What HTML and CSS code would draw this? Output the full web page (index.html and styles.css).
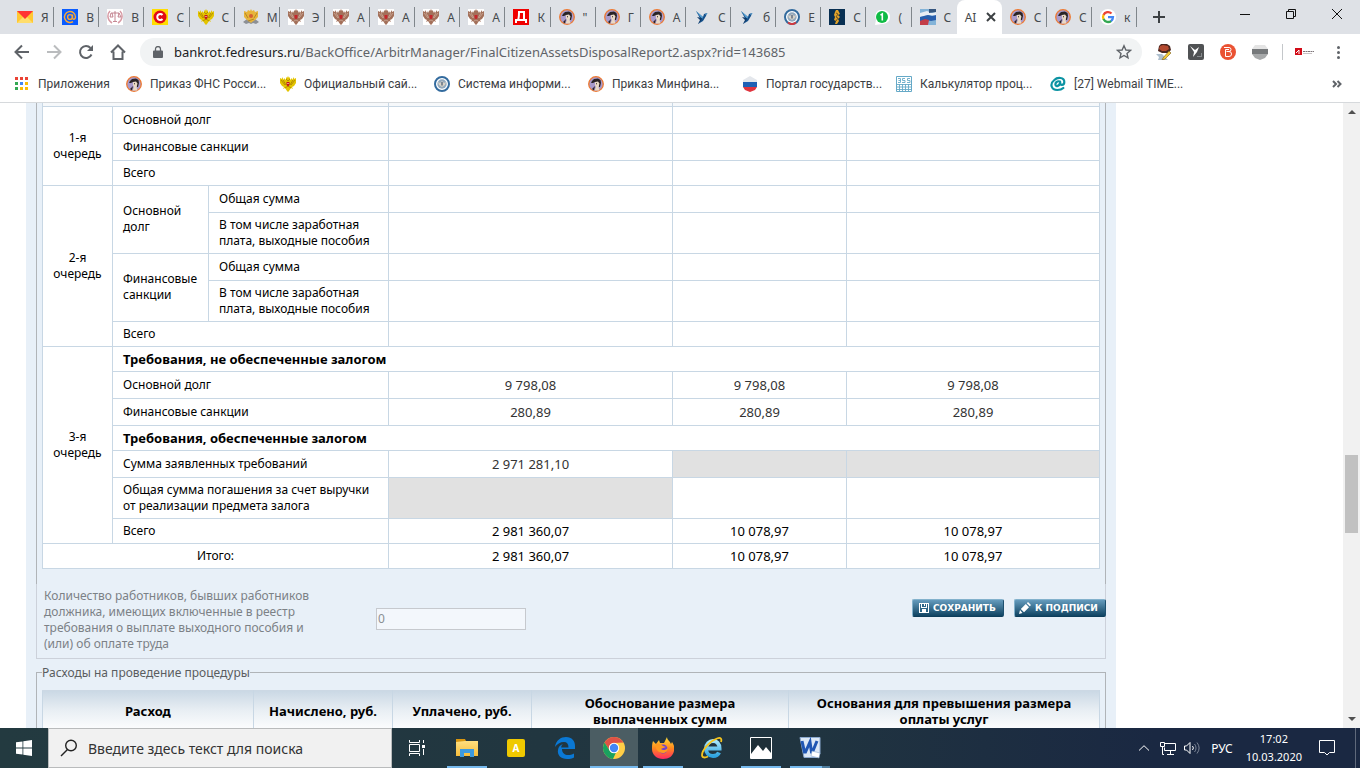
FILE: index.html
```html
<!DOCTYPE html>
<html lang="ru">
<head>
  <meta charset="UTF-8">
  <meta name="viewport" content="width=device-width, initial-scale=1.0">
  <title>АРМ арбитражного управляющего</title>
  <link rel="stylesheet" href="styles.css">
</head>
<body>
  <!-- Icon sprite -->
  <svg class="sprite" aria-hidden="true">
    <defs>
      <linearGradient id="g-fox" x1="0" y1="0" x2="0" y2="1"><stop offset="0" stop-color="#ffe03a"/><stop offset=".5" stop-color="#ff8a1e"/><stop offset="1" stop-color="#ff2a63"/></linearGradient>
      <linearGradient id="g-ie" x1="0" y1="0" x2="0" y2="1"><stop offset="0" stop-color="#a8e6fb"/><stop offset="1" stop-color="#2fa4e0"/></linearGradient>
      <linearGradient id="g-folder" x1="0" y1="0" x2="0" y2="1"><stop offset="0" stop-color="#ffdf80"/><stop offset="1" stop-color="#f7bd3b"/></linearGradient>
    </defs>
    <symbol id="mail" viewBox="0 0 16 16"><path fill="#ffc832" d="M0 2h16v12H0z"/><path fill="#ffdd6b" d="M0 14l6-6h4l6 6z"/><path fill="#f33" d="M0 2h16L8 10z"/></symbol>
    <symbol id="at" viewBox="0 0 16 16"><path fill="#0a5cff" d="M0 0h16v16H0z"/><circle cx="8" cy="8" r="2.4" fill="none" stroke="#ffa930" stroke-width="1.4"/><path fill="none" stroke="#ffa930" stroke-width="1.4" d="M10.5 5.6v3.2c0 2.2 3 1.8 3-.8a5.5 5.5 0 1 0-2.5 4.6"/></symbol>
    <symbol id="scales" viewBox="0 0 16 16"><path fill="#fff" d="M0 0h16v16H0z"/><path fill="none" stroke="#d79aa4" stroke-width="1.5" d="M3 2C0 5 0 11 5 14M13 2c3 3 3 9-2 12"/><path fill="none" stroke="#b66a78" stroke-width=".8" d="M8 2v10M4 4h8M4 4l-1 4h3L5 4M12 4l-1 4h3l-2-4M6 12.5h4"/></symbol>
    <symbol id="cons" viewBox="0 0 16 16"><path fill="#fd0" d="M0 0h16v16H0z"/><circle cx="8" cy="8" r="6.5" fill="#e20a17"/><path fill="none" stroke="#fff" stroke-width="2" d="M10.5 6a3 3 0 1 0 0 4"/></symbol>
    <symbol id="goldeagle" viewBox="0 0 16 16"><path fill="#e3c400" d="M0 2l2 1V1l2 3V2l2 2V1l1 1 1-2 1 2 1-1v3l2-2v2l2-3v2l2-1v5l-2 3-2 1 1 2-2-1-2 3-1 1-1-1-2-3-2 1 1-2-2-1-2-3z"/><path fill="none" stroke="#a07900" stroke-width=".7" d="M1 4l4 5M3 4l3 5M15 4l-4 5M13 4l-3 5M5 12l3-2 3 2M6 3l2 2 2-2"/><path fill="#c4161c" d="M6.5 6h3v3L8 10.5 6.5 9z"/><path fill="#fff" d="M7.5 7h1v1h-1z"/></symbol>
    <symbol id="greyeagle" viewBox="0 0 16 16"><path fill="#8d9095" d="M0 13l4-3h8l4 3-3 2-3-1-2 1-2-1-3 1z"/><path fill="#e7b43b" d="M1 2l3 1 1-2 2 1 1-2 1 2 2-1 1 2 3-1v6l-3 3-3 2-1 1-1-1-3-2-3-3z"/><path fill="none" stroke="#a67c21" stroke-width=".8" d="M2 4l3 5M14 4l-3 5M5 12l6-2"/><circle cx="8" cy="7" r="2" fill="#d65d32"/></symbol>
    <symbol id="eagle" viewBox="0 0 16 16"><path fill="#fff" d="M0 0h16v16H0z"/><path fill="#a3705a" d="M0 2l2 1V1l2 3 1-2 1 2V1l1 1 1-2 1 2 1-1v3l1-2 1 2 2-3v2l2-1v5l-2 3-2 1 1 2-2-1-2 3-1 1-1-1-2-3-2 1 1-2-2-1-2-3z"/><path fill="none" stroke="#dcc0ae" stroke-width=".6" d="M1 4l4 5M3 4l3 5M15 4l-4 5M13 4l-3 5M6 12l2-1 2 1"/><path fill="#c5262c" d="M6.5 6h3v3L8 10.5 6.5 9z"/></symbol>
    <symbol id="de" viewBox="0 0 16 16"><path fill="#f00000" d="M0 0h16v16H0z"/><path fill="none" stroke="#fff" stroke-width="2" d="M3 14v-3h10v3M5 11c1-2 1-4 1-8h5v8"/></symbol>
    <symbol id="face" viewBox="0 0 16 16"><circle cx="8" cy="8" r="7.3" fill="#a99acb" stroke="#ee7a32" stroke-width="1.3"/><path fill="#2a2326" d="M4 5l2-2 4-.5 2.500 1.500.5 3-1 4-1 0-1-4-3-1-2 1-2 0z"/><path fill="#ead9c5" d="M7 6l3-.5 1.500 2-1 3.500 1 3.500H6.500L8 11 7 9z"/><path fill="#2a2326" d="M8 7.300h1v1H8zM4 13l3-3-1 4.500z"/></symbol>
    <symbol id="bird" viewBox="0 0 16 16"><path fill="#15508b" d="M2 2l7 6 1-3 3-1-1 3-3 5-5 3 3-4z"/><path fill="#5aa3d4" d="M2 2l7 6-1 2zM11 5l3-1-2 2z"/><path fill="#0d3a6b" d="M3 8l5 1-1 3-3 3 2-4z"/></symbol>
    <symbol id="seal" viewBox="0 0 16 16"><circle cx="8" cy="8" r="7" fill="#fff" stroke="#336b9e" stroke-width="2"/><circle cx="8" cy="8" r="4.7" fill="#93a9bd"/><path fill="#d8d2c7" d="M4 6l2 1 2-2 2 2 2-1-1 3-3 2-3-2z"/><path fill="#7d8793" d="M7 6h2v3l-1 1-1-1z"/></symbol>
    <symbol id="sealred" viewBox="0 0 16 16"><use href="#seal"/><path fill="none" stroke="#d13b40" stroke-width="2" d="M4 13.5c2.500 2 5.500 2 8 0"/></symbol>
    <symbol id="goldstatue" viewBox="0 0 16 16"><path fill="#082f52" d="M0 0h16v16H0z"/><path fill="#e3a42a" d="M7 1h2l1 2 1 2-2 1 2 2-2 2 1 2-2 3H6l1-3-2-1 1-3-1-2 1-3z"/><path fill="none" stroke="#75561e" d="M7 4l2 1-2 3 2 1-2 3"/></symbol>
    <symbol id="one" viewBox="0 0 16 16"><path fill="#fff" d="M7 1c12-1 12 14 1 14l-7 1 1-5C0 5 3 1 7 1z"/><circle cx="8" cy="8" r="6" fill="#10bb45"/><path fill="none" stroke="#fff" stroke-width="1.6" d="M6.5 6.200L8.300 5v6.500"/></symbol>
    <symbol id="flagpic" viewBox="0 0 16 16"><path fill="#83b3d8" d="M0 0h16v16H0z"/><path fill="#e9eef4" d="M0 4l7-2 5 2 4-1v4L8 6 0 8z"/><path fill="#285eac" d="M0 8l8-2 4 1 4-1v5l-5 1-5-1-6 2z"/><path fill="#c33d48" d="M0 12l5-2 4 1-1 5H0z"/><path fill="#35557e" d="M9 0h7v3l-7 1z"/></symbol>
    <symbol id="google" viewBox="0 0 16 16"><circle cx="8" cy="8" r="8" fill="#fff"/><path fill="none" stroke="#ea4335" stroke-width="2.3" d="M3.500 5.900a5 5 0 0 1 8-1.400"/><path fill="none" stroke="#fbbc05" stroke-width="2.3" d="M3.600 10.400a5 5 0 0 1 0-4.700"/><path fill="none" stroke="#34a853" stroke-width="2.3" d="M3.500 10.100a5 5 0 0 0 7.800 1.700"/><path fill="none" stroke="#4285f4" stroke-width="2.3" d="M8 8.100h5a5 5 0 0 1-2 4"/></symbol>
    <symbol id="russia" viewBox="0 0 16 16"><path fill="#e4e7ec" d="M1 6V4l7-4 7 4v2z"/><path fill="#1f61b5" d="M1 6h14v5H1z"/><path fill="#e0343e" d="M1 11h14l-2 3-5 2-5-2z"/></symbol>
    <symbol id="mouse" viewBox="0 0 16 16"><path fill="none" stroke="#0c93a3" stroke-width="2.2" stroke-linecap="round" d="M10 5.500c-3-1-5 1.500-4.500 3.500.5 2 4 1 4.500-2l.3-1.500c-1 5 4 4 4 .5 0-5-7-5-10-2-5 4-3 10 3 10 3 0 5-1 6-2"/></symbol>
    <symbol id="calc" viewBox="0 0 16 16"><path fill="#fff" stroke="#65a9c7" d="M.5.5h15v15H.5z"/><path stroke="#65a9c7" fill="none" stroke-width=".9" d="M1 8.500h14M1 11h14M1 13.500h14M3.500 8v8M6.500 8v8M9.500 8v8M12.500 8v8M2 2.500h2.500v4H2M2.500 4.500h2M9 2.500H6.500v2H9v2H6M14 2.500h-2.500v2H14v2h-3"/></symbol>
  </svg>

  <header class="browser">
    <div class="tab-strip">
      <nav class="tabs" aria-label="Вкладки">
        <a class="tab" href="#"><svg><use href="#mail"/></svg><span>Я</span></a>
        <a class="tab" href="#"><svg><use href="#at"/></svg><span>В</span></a>
        <a class="tab" href="#"><svg><use href="#scales"/></svg><span>В</span></a>
        <a class="tab" href="#"><svg><use href="#cons"/></svg><span>С</span></a>
        <a class="tab" href="#"><svg><use href="#goldeagle"/></svg><span>С</span></a>
        <a class="tab" href="#"><svg><use href="#greyeagle"/></svg><span>М</span></a>
        <a class="tab" href="#"><svg><use href="#eagle"/></svg><span>Э</span></a>
        <a class="tab" href="#"><svg><use href="#eagle"/></svg><span>А</span></a>
        <a class="tab" href="#"><svg><use href="#eagle"/></svg><span>А</span></a>
        <a class="tab" href="#"><svg><use href="#eagle"/></svg><span>А</span></a>
        <a class="tab" href="#"><svg><use href="#eagle"/></svg><span>А</span></a>
        <a class="tab" href="#"><svg><use href="#de"/></svg><span>К</span></a>
        <a class="tab" href="#"><svg><use href="#face"/></svg><span>"</span></a>
        <a class="tab" href="#"><svg><use href="#face"/></svg><span>Г</span></a>
        <a class="tab" href="#"><svg><use href="#face"/></svg><span>А</span></a>
        <a class="tab" href="#"><svg><use href="#bird"/></svg><span>С</span></a>
        <a class="tab" href="#"><svg><use href="#bird"/></svg><span>б</span></a>
        <a class="tab" href="#"><svg><use href="#sealred"/></svg><span>Е</span></a>
        <a class="tab" href="#"><svg><use href="#goldstatue"/></svg><span>С</span></a>
        <a class="tab" href="#"><svg><use href="#one"/></svg><span>(</span></a>
        <a class="tab before-active" href="#"><svg><use href="#flagpic"/></svg><span>С</span></a>
        <div class="tab active"><span>АI</span><button class="tab-close" aria-label="Закрыть"><svg viewBox="0 0 10 10"><path d="M1 1l8 8M9 1L1 9"/></svg></button></div>
        <a class="tab" href="#"><svg><use href="#face"/></svg><span>С</span></a>
        <a class="tab" href="#"><svg><use href="#face"/></svg><span>С</span></a>
        <a class="tab" href="#"><svg><use href="#google"/></svg><span>к</span></a>
      </nav>
      <button class="new-tab" aria-label="Новая вкладка"><svg viewBox="0 0 12 12"><path d="M6 0v12M0 6h12"/></svg></button>
      <div class="window-controls">
        <button aria-label="Свернуть"><svg viewBox="0 0 12 12"><path d="M1 6.500h10"/></svg></button>
        <button aria-label="Восстановить"><svg viewBox="0 0 12 12"><path d="M1.500 3.500h7v7h-7zM3.500 3.500v-2h7v7h-2"/></svg></button>
        <button aria-label="Закрыть окно"><svg viewBox="0 0 12 12"><path d="M1 1l10 10M11 1L1 11"/></svg></button>
      </div>
    </div>

    <div class="toolbar">
      <button class="nav-btn" aria-label="Назад"><svg viewBox="0 0 16 16"><path d="M15 8H2M8 1.500L1.500 8 8 14.500"/></svg></button>
      <button class="nav-btn dim" aria-label="Вперед"><svg viewBox="0 0 16 16"><path d="M1 8h13M8 1.500L14.500 8 8 14.500"/></svg></button>
      <button class="nav-btn" aria-label="Обновить"><svg viewBox="0 0 16 16"><path d="M13.500 10.500A6 6 0 1 1 12.500 4"/><path class="solid" d="M15 1v6H9z"/></svg></button>
      <button class="nav-btn" aria-label="Домой"><svg viewBox="0 0 16 16"><path d="M1 8.500L8 1.500l7 7M3.500 7.500V15h9V7.500"/></svg></button>
      <div class="address">
        <svg class="lock" viewBox="0 0 10 12"><path fill="#5f6368" d="M1 4.500h8a1 1 0 0 1 1 1V11a1 1 0 0 1-1 1H1a1 1 0 0 1-1-1V5.500a1 1 0 0 1 1-1z"/><path fill="none" stroke="#5f6368" stroke-width="1.3" d="M2.500 5V3a2.500 2.500 0 0 1 5 0v2"/></svg>
        <span class="url"><b>bankrot.fedresurs.ru</b>/BackOffice/ArbitrManager/FinalCitizenAssetsDisposalReport2.aspx?rid=143685</span>
        <button class="star" aria-label="В закладки"><svg viewBox="0 0 16 16"><path d="M8 1.800l1.900 4.200 4.500.4-3.400 3 1 4.500-4-2.400-4 2.400 1-4.500-3.400-3 4.500-.4z"/></svg></button>
      </div>
      <div class="extensions">
        <svg viewBox="0 0 16 16"><path fill="#aebfce" d="M0 10h6l6 6H2l1-3z"/><path fill="#4b2720" d="M3 2l2-2h6l3 2 1 4-3 3H6L2 7z"/><path fill="#b4492f" d="M4 2l3-1 5 1 1 3-3 2H6L3 5z"/><path fill="#f3ca37" stroke="#785c20" stroke-width=".6" d="M7 14l6-7 2 2-6 6-3 1z"/></svg>
        <svg viewBox="0 0 16 16"><rect width="16" height="16" rx="2" fill="#505254"/><path fill="#fff" d="M2 2l5 4 4-3-2 5-4 5 1-5z"/><path stroke="#85898c" d="M9 12.500h5M13.500 9v4"/></svg>
        <svg viewBox="0 0 16 16"><circle cx="8" cy="8" r="8" fill="#ea5233"/><path fill="none" stroke="#fff" d="M4 3.500h5a2 2 0 0 1 0 4H6.500M9 7.500a2.500 2.500 0 0 1 0 5H5.500v-7H9"/></svg>
        <svg viewBox="0 0 16 16"><path fill="#e4e4e4" d="M3 1h10l3 4H0z"/><path fill="#76797b" d="M0 5h16v5H0z"/><path fill="#a7a9aa" d="M0 10h16l-3 4-5 2-5-2z"/></svg>
      </div>
      <i class="divider"></i>
      <svg class="profile" viewBox="0 0 20 8"><path fill="#d20b17" d="M0 0h7v7H0z"/><path fill="none" stroke="#fff" d="M1 5l3-3v4"/><path fill="none" stroke="#7c7478" stroke-dasharray="2 .5" d="M8 3.500h11"/><path fill="none" stroke="#c8c1c4" d="M8 5.500h9"/></svg>
      <button class="menu-btn" aria-label="Меню"><i></i><i></i><i></i></button>
    </div>

    <nav class="bookmarks" aria-label="Закладки">
      <a class="apps" href="#"><svg viewBox="0 0 14 14"><path fill="#ea4335" d="M0 0h3v3H0zM5 0h3v3H5zM10 0h3v3h-3z"/><path fill="#34a853" d="M0 5h3v3H0zM0 10h3v3H0z"/><path fill="#4285f4" d="M5 5h3v3H5z"/><path fill="#fbbc05" d="M10 5h3v3h-3zM5 10h3v3H5zM10 10h3v3h-3z"/></svg>Приложения</a>
      <a href="#"><svg><use href="#face"/></svg>Приказ ФНС Росси...</a>
      <a href="#"><svg><use href="#goldeagle"/></svg>Официальный сай...</a>
      <a href="#"><svg><use href="#seal"/></svg>Система информи...</a>
      <a href="#"><svg><use href="#face"/></svg>Приказ Минфина...</a>
      <a href="#"><svg><use href="#russia"/></svg>Портал государств...</a>
      <a href="#"><svg><use href="#calc"/></svg>Калькулятор проц...</a>
      <a href="#"><svg><use href="#mouse"/></svg>[27] Webmail TIME...</a>
      <button class="more" aria-label="Другие закладки"><svg viewBox="0 0 10 8"><path d="M1 1l3 3-3 3M5.500 1l3 3-3 3"/></svg></button>
    </nav>
  </header>

  <main class="viewport">
    <div class="page">
      <section class="claims">
        <table class="grid">
          <colgroup><col class="c-queue"><col class="c-kind"><col class="c-sub"><col class="c-claimed"><col class="c-included"><col></colgroup>
          <tbody>
            <tr class="edge"><td colspan="3"></td><td></td><td></td><td></td></tr>
            <tr class="tall"><td class="queue" rowspan="3">1-я очередь</td><td colspan="2">Основной долг</td><td></td><td></td><td></td></tr>
            <tr class="tall"><td colspan="2">Финансовые санкции</td><td></td><td></td><td></td></tr>
            <tr><td colspan="2">Всего</td><td></td><td></td><td></td></tr>

            <tr class="tall"><td class="queue" rowspan="5">2-я очередь</td><td rowspan="2">Основной долг</td><td>Общая сумма</td><td></td><td></td><td></td></tr>
            <tr><td>В том числе заработная плата, выходные пособия</td><td></td><td></td><td></td></tr>
            <tr class="tall"><td rowspan="2">Финансовые санкции</td><td>Общая сумма</td><td></td><td></td><td></td></tr>
            <tr><td>В том числе заработная плата, выходные пособия</td><td></td><td></td><td></td></tr>
            <tr><td colspan="2">Всего</td><td></td><td></td><td></td></tr>

            <tr><td class="queue" rowspan="7">3-я очередь</td><th colspan="5">Требования, не обеспеченные залогом</th></tr>
            <tr class="tall"><td colspan="2">Основной долг</td><td class="num field">9 798,08</td><td class="num field">9 798,08</td><td class="num field">9 798,08</td></tr>
            <tr class="tall"><td colspan="2">Финансовые санкции</td><td class="num field">280,89</td><td class="num field">280,89</td><td class="num field">280,89</td></tr>
            <tr><th colspan="5">Требования, обеспеченные залогом</th></tr>
            <tr class="tall"><td colspan="2">Сумма заявленных требований</td><td class="num field">2 971 281,10</td><td class="off"></td><td class="off"></td></tr>
            <tr><td colspan="2">Общая сумма погашения за счет выручки от реализации предмета залога</td><td class="off"></td><td></td><td></td></tr>
            <tr><td colspan="2">Всего</td><td class="num">2 981 360,07</td><td class="num">10 078,97</td><td class="num">10 078,97</td></tr>
            <tr><td class="total" colspan="3">Итого:</td><td class="num">2 981 360,07</td><td class="num">10 078,97</td><td class="num">10 078,97</td></tr>
          </tbody>
        </table>
      </section>

      <section class="workers">
        <label for="workers">Количество работников, бывших работников должника, имеющих включенные в реестр требования о выплате выходного пособия и (или) об оплате труда</label>
        <input id="workers" type="text" value="0" disabled>
        <div class="actions">
          <button class="action"><svg viewBox="0 0 10 10"><path fill="#fff" d="M0 0h10v10H0z"/><path fill="#2c6688" d="M1 1h1v8H1zM8 1h1v8H8zM3 1h4v3H3zM2 5h6v4H2z"/><path fill="#fff" d="M3 6h4v3H3zM5 1h1v2H5z"/></svg>СОХРАНИТЬ</button>
          <button class="action sign"><svg viewBox="0 0 12 12"><path fill="#fff" d="M0 12l1-4 2.500 3zM1.800 7l5-5L10 5.200l-5 5zM7.800 1.200L9 0l3 3-1.200 1.200z"/></svg>К ПОДПИСИ</button>
        </div>
      </section>

      <fieldset class="expenses">
        <legend>Расходы на проведение процедуры</legend>
        <table class="grid head">
          <colgroup><col class="e-name"><col class="e-sum"><col class="e-sum"><col class="e-reason"><col></colgroup>
          <thead>
            <tr><th>Расход</th><th>Начислено, руб.</th><th>Уплачено, руб.</th><th>Обоснование размера<br>выплаченных сумм</th><th>Основания для превышения размера<br>оплаты услуг</th></tr>
          </thead>
        </table>
      </fieldset>
    </div>
    <div class="scrollbar">
      <svg viewBox="0 0 8 4"><path d="M0 4l4-4 4 4z"/></svg>
      <div class="track"><div class="thumb"></div></div>
      <svg viewBox="0 0 8 4"><path d="M0 0h8L4 4z"/></svg>
    </div>
  </main>

  <footer class="taskbar">
    <button class="start" aria-label="Пуск"><svg viewBox="0 0 16 16"><path fill="#fff" d="M0 2.300L6.500 1.400v6.200H0zM7.300 1.200L16 0v7.600H7.300zM0 8.400h6.500v6.200L0 13.700zM7.300 8.400H16V16l-8.700-1.200z"/></svg></button>
    <div class="search">
      <svg viewBox="0 0 18 18"><path fill="none" stroke="#222" stroke-width="1.4" d="M7.500 10.500L1 17"/><circle cx="11" cy="6.500" r="5.3" fill="none" stroke="#222" stroke-width="1.4"/></svg>
      <input type="text" aria-label="Поиск" placeholder="Введите здесь текст для поиска">
    </div>
    <button class="task task-view" aria-label="Представление задач"><svg viewBox="0 0 16 16"><path fill="none" stroke="#fff" d="M.5 0v2.500h10V0M.5 16v-2.500h10V16M.5 4.500h10v7H.5zM14.500 0v3M14.500 9v6"/><path fill="#fff" d="M13 5h3v3h-3z"/></svg></button>
    <button class="task open" aria-label="Проводник"><svg viewBox="0 0 22 18"><path fill="#d9960f" d="M0 0h9l1 2v3H0z"/><path fill="url(#g-folder)" d="M0 3l9-1h13v15H0z"/><path fill="#3d9ade" d="M4 10h14v8h-4v-4H8v4H4z"/></svg></button>
    <button class="task" aria-label="A"><span class="a-icon">A</span></button>
    <button class="task" aria-label="Edge"><svg viewBox="0 0 22 22"><path fill="#0a78d4" d="M1 10C2 3 7 0 12 0c6 0 9 4 9 9v3H8c0 4 3 6 6 6 2 0 4-.5 6-1.600v4c-2 1-4 1.600-7 1.600-6 0-10-4-9-9 .3-3 2-5 5-6-1.200 1-1.700 2-1.800 3.500h7.300C14.500 7 13 5 10 5 6 5 3 7 1 10z"/></svg></button>
    <button class="task open current" aria-label="Chrome"><svg viewBox="0 0 22 22"><circle cx="11" cy="11" r="11" fill="#ffcd46"/><path fill="#de5246" d="M1.500 5.500A11 11 0 0 1 20.500 5.500L11 6a5 5 0 0 0-4.300 7.500z"/><path fill="#1aa15f" d="M1.500 5.500l5.200 8A5 5 0 0 0 13 15.500L10 22A11 11 0 0 1 1.500 5.500z"/><circle cx="11" cy="11" r="5.2" fill="#fff"/><circle cx="11" cy="11" r="4.2" fill="#4286f5"/></svg></button>
    <button class="task open" aria-label="Firefox"><svg viewBox="0 0 22 22"><path fill="url(#g-fox)" d="M1 4l3 3 3-4 1 3h4l3-6c0 3 3 4 4 7l1-2c2 3 3 6 2 9-1 5-5 8-11 8S0 18 0 12c0-3 0-5 1-8z"/><circle cx="11" cy="12" r="4.500" fill="#7142cf"/><path fill="#ff9a20" d="M4 7c3-1 5 0 7 2l3 1c-2 1-4 1-5 2 2 2 5 1 7-1 0 5-5 6-9 4-3-2-4-5-3-8z"/></svg></button>
    <button class="task" aria-label="Internet Explorer"><svg viewBox="0 0 22 22"><path fill="none" stroke="url(#g-ie)" stroke-width="4" d="M6 11.500h12.500c0-5-3-7.500-6.500-7.500s-7 3-7 7.500 3 7.500 7 7.500c3 0 5-1 6-3.500"/><path fill="none" stroke="#f6c51e" stroke-width="1.8" d="M20 5c1-3 0-5-4-3.500C9 4 1 13 1 18c0 3 3 3 6 1.500"/></svg></button>
    <button class="task open" aria-label="Фотографии"><svg viewBox="0 0 22 22"><path fill="#1e2f38" stroke="#fff" d="M.5.5h21v21H.5z"/><path fill="#fff" d="M1 17l7-9 5 6 3-4 5 6v5H1z"/></svg></button>
    <button class="task open grouped" aria-label="Word"><svg viewBox="0 0 22 22"><path fill="#dce8f6" stroke="#8ca9cf" d="M1 .5h20v16l-3 4H5z"/><path fill="none" stroke="#1f56b3" stroke-width="3" d="M3 4l2.500 11h1L11 5l1.500 10h1L18 4"/><path fill="#fff" stroke="#8ca9cf" stroke-width=".6" d="M13 14l8 2-1 5-8-2z"/></svg></button>
    <div class="tray">
      <svg class="chevron" viewBox="0 0 12 6"><path d="M1 5.500L6 .7l5 4.800"/></svg>
      <svg class="net" viewBox="0 0 16 13"><path d="M5 1.500h10.500v7h-11v-3M10.500 9v3M7 12.500h7M.5.5h4v4h-4zM2.500 5v7.500H4"/></svg>
      <svg class="sound" viewBox="0 0 16 12"><path d="M.5 4v4h2L6 11.500V.5L2.500 4z"/><path d="M8.500 4a3 3 0 0 1 0 4"/><path class="faint" d="M10.500 2a6 6 0 0 1 0 8M13 .5a9 9 0 0 1 0 11"/></svg>
      <span class="lang">РУС</span>
      <div class="clock"><span>17:02</span><span>10.03.2020</span></div>
      <svg class="note" viewBox="0 0 16 16"><path d="M.5.5h15v12h-5L8 15l-2.500-2.500h-5z"/></svg>
      <i class="peek"></i>
    </div>
  </footer>
</body>
</html>
```

FILE: styles.css
```css
* {
  box-sizing: border-box;
}

body {
  margin: 0;
  height: 100vh;
  display: flex;
  flex-direction: column;
  overflow: hidden;
  font-family: "Noto Sans", "Open Sans", sans-serif;
  font-size: 12px;
  background: #fff;
}

button {
  border: 0;
  padding: 0;
  background: none;
  font: inherit;
  color: inherit;
}

a {
  color: inherit;
  text-decoration: none;
}

svg {
  display: block;
  flex: none;
}

.sprite {
  position: absolute;
  width: 0;
  height: 0;
}

/* Tabs */
.tab-strip {
  display: flex;
  height: 34px;
  background: #dee1e6;
}

.tabs {
  display: flex;
  flex: 0 1 1128px;
  margin-left: 9px;
  min-width: 0;
}

.tab {
  position: relative;
  display: flex;
  align-items: center;
  flex: 1 1 0;
  min-width: 0;
  gap: 8px;
  padding-left: 8px;
  color: #45494d;
}

.tab svg {
  width: 16px;
  height: 16px;
}

.tab span {
  white-space: nowrap;
}

.tab::after {
  content: "";
  position: absolute;
  right: 0;
  top: 7px;
  width: 1px;
  height: 20px;
  background: #80868b;
}

.tab.active {
  background: #fff;
  border-radius: 8px 8px 0 0;
}

.tab.active::after,
.tab.before-active::after {
  display: none;
}

.tab-close svg {
  width: 10px;
  height: 10px;
  margin-left: 2px;
  fill: none;
  stroke: #3c4043;
  stroke-width: 2;
}

.new-tab {
  padding: 0 16px;
}

.new-tab svg {
  width: 12px;
  height: 12px;
  fill: none;
  stroke: #3c4043;
  stroke-width: 2;
}

.window-controls {
  display: flex;
  margin-left: auto;
}

.window-controls button {
  width: 46px;
  height: 28px;
  display: flex;
  align-items: center;
  justify-content: center;
}

.window-controls svg {
  width: 12px;
  height: 12px;
  fill: none;
  stroke: #111;
}

/* Toolbar */
.toolbar {
  display: flex;
  align-items: center;
  height: 36px;
  padding: 0 18px 0 14px;
}

.nav-btn {
  width: 32px;
}

.nav-btn svg {
  width: 16px;
  height: 16px;
  fill: none;
  stroke: #5f6368;
  stroke-width: 2;
}

.nav-btn .solid {
  fill: #5f6368;
  stroke: none;
}

.nav-btn.dim svg {
  stroke: #babcbe;
}

.address {
  display: flex;
  align-items: center;
  flex: 1;
  min-width: 0;
  height: 28px;
  margin: 0 14px 0 -2px;
  padding: 0 10px 0 13px;
  border-radius: 14px;
  background: #f1f3f4;
}

.lock {
  width: 10px;
  height: 12px;
  margin-right: 11px;
}

.url {
  flex: 1;
  overflow: hidden;
  white-space: nowrap;
  font-size: 13px;
  color: #5f6368;
}

.url b {
  font-weight: 400;
  color: #202124;
}

.star svg {
  width: 16px;
  height: 16px;
  fill: none;
  stroke: #5f6368;
  stroke-width: 1.4;
}

.extensions {
  display: flex;
  gap: 16px;
}

.extensions svg {
  width: 16px;
  height: 16px;
}

.divider {
  width: 1px;
  height: 16px;
  margin: 0 12px 0 14px;
  background: #c4c7ca;
}

.profile {
  width: 20px;
  height: 8px;
  margin-right: 19px;
}

.menu-btn {
  display: flex;
  flex-direction: column;
  align-items: center;
  gap: 2px;
  width: 8px;
}

.menu-btn i {
  width: 3px;
  height: 3px;
  border-radius: 50%;
  background: #5f6368;
}

/* Bookmarks */
.bookmarks {
  display: flex;
  align-items: center;
  height: 33px;
  padding: 0 18px 4px 15px;
  border-bottom: 1px solid #d6d9dc;
  color: #3c4043;
  font-family: Roboto, "Noto Sans", sans-serif;
}

.bookmarks a {
  display: flex;
  align-items: center;
  flex: none;
  gap: 8px;
  width: 154px;
  white-space: nowrap;
}

.bookmarks a svg {
  width: 16px;
  height: 16px;
}

.bookmarks a.apps {
  gap: 9px;
  width: 111px;
}

.bookmarks a.apps svg {
  width: 14px;
  height: 14px;
}

.more {
  margin-left: auto;
}

.more svg {
  width: 10px;
  height: 8px;
  fill: none;
  stroke: #5f6368;
  stroke-width: 2;
}

/* Page */
.viewport {
  display: flex;
  flex: 1;
  min-height: 0;
  overflow: hidden;
}

.page {
  flex: 0 1 1090px;
  min-width: 0;
  margin-left: 26px;
  padding: 0 10px;
  background: #e8f0f8;
  line-height: 16px;
}

.claims {
  padding: 0 5px 15px;
  border: solid #b0b4b8;
  border-width: 0 1px;
}

.grid {
  width: 100%;
  table-layout: fixed;
  border-collapse: collapse;
  background: #fff;
}

.grid td,
.grid th {
  height: 25px;
  padding: 4px 10px;
  border: 1px solid #c8d7e4;
  text-align: left;
  vertical-align: middle;
}

.grid th,
.grid .num {
  font-size: 13px;
}

.grid .tall td {
  height: 27px;
}

.grid .edge td {
  height: 3px;
  padding: 0;
  border-top: 0;
  background: #f6f8fa;
}

.grid .queue,
.grid .total,
.grid .num {
  text-align: center;
}

.grid .field {
  color: #333;
}

.grid .off {
  background: #e1e1e1;
}

.c-queue {
  width: 70px;
}

.c-kind {
  width: 96px;
}

.c-sub {
  width: 180px;
}

.c-claimed {
  width: 284px;
}

.c-included {
  width: 174px;
}

.workers {
  display: flex;
  align-items: flex-start;
  height: 75px;
  padding: 4px 0 0 7px;
  border: 1px solid #ccd1da;
  border-top: 0;
}

.workers label {
  width: 288px;
  color: #7c8186;
}

.workers input {
  width: 150px;
  height: 22px;
  margin: 20px 0 0 44px;
  padding: 1px;
  border: 1px solid #c6c9ce;
  background: #f3f7fc;
  color: #8b8f93;
  font: inherit;
}

.actions {
  display: flex;
  gap: 10px;
  margin: 11px -1px 0 auto;
}

.action {
  display: flex;
  align-items: center;
  gap: 4px;
  width: 92px;
  height: 18px;
  padding-left: 6px;
  border: 1px solid #4c84a6;
  border-color: #82b1cc #1d506f #0d3e5b #82b1cc;
  border-radius: 2px;
  background: linear-gradient(#659bbd, #0f4362);
  color: #fff;
  font: bold 9px "DejaVu Sans", sans-serif;
  white-space: nowrap;
}

.action svg {
  width: 10px;
  height: 10px;
}

.action.sign {
  padding-left: 4px;
}

.action.sign svg {
  width: 12px;
  height: 12px;
}

.expenses {
  min-width: 0;
  margin: 6px 0 0;
  padding: 9px 5px 0;
  border: 1px solid #b0b4b8;
}

.expenses legend {
  padding: 0;
  color: #5a5d60;
}

.head th {
  height: 42px;
  border-top-color: #ccd8e4;
  text-align: center;
}

.head thead {
  background: linear-gradient(#c9d7e4, #e9eff4 50%, #fff);
}

.e-name {
  width: 211px;
}

.e-sum {
  width: 139px;
}

.e-reason {
  width: 257px;
}

/* Scrollbar */
.scrollbar {
  display: flex;
  flex-direction: column;
  align-items: center;
  width: 17px;
  margin-left: auto;
  padding: 7px 0;
  background: #f1f1f1;
}

.scrollbar svg {
  width: 8px;
  height: 4px;
  fill: #505050;
}

.track {
  flex: 1;
  width: 13px;
  padding-top: 341px;
}

.thumb {
  height: 78px;
  background: #c1c1c1;
}

/* Taskbar */
.taskbar {
  display: flex;
  flex: none;
  height: 40px;
  background: linear-gradient(90deg, #233a40, #203440 60%, #1a2842 85%);
  color: #fff;
}

.start {
  display: flex;
  align-items: center;
  justify-content: center;
  width: 48px;
}

.start svg {
  width: 16px;
  height: 16px;
}

.search {
  display: flex;
  align-items: center;
  gap: 10px;
  width: 344px;
  padding: 0 11px;
  border: 1px solid #b9bbbc;
  background: #f1f1f1;
}

.search svg {
  width: 18px;
  height: 18px;
}

.search input {
  flex: 1;
  min-width: 0;
  padding: 0;
  border: 0;
  background: none;
  font: 14px "Noto Sans", sans-serif;
}

.search input::placeholder {
  color: #333;
}

.task {
  display: flex;
  align-items: center;
  justify-content: center;
  position: relative;
  width: 48px;
  margin-right: 1px;
}

.task svg {
  width: 22px;
  height: 22px;
}

.task-view {
  width: 50px;
}

.task-view svg {
  width: 16px;
  height: 16px;
}

.task.open::after {
  content: "";
  position: absolute;
  bottom: 0;
  left: 4px;
  right: 4px;
  height: 2px;
  background: #76b9ed;
}

.task.current {
  background: #4b5d63;
}

.task.current::after {
  left: 0;
  right: 0;
}

.task.grouped::after {
  background: linear-gradient(90deg, #76b9ed 80%, #4d7c9d 80%);
}

.a-icon {
  width: 18px;
  height: 18px;
  border-radius: 2px;
  background: #efc900;
  font: bold 10px/18px "Open Sans", sans-serif;
}

.tray {
  display: flex;
  align-items: center;
  margin-left: auto;
}

.tray svg {
  fill: none;
  stroke: #fff;
}

.chevron {
  width: 12px;
  height: 6px;
  margin-right: 10px;
}

.net {
  width: 16px;
  height: 13px;
  margin-right: 8px;
}

.sound {
  width: 16px;
  height: 12px;
  margin-right: 11px;
}

.tray .faint {
  stroke: #7b8596;
}

.lang {
  margin-right: 13px;
}

.clock {
  display: flex;
  flex-direction: column;
  align-items: center;
  font-size: 11px;
  line-height: 18px;
}

.note {
  width: 16px;
  height: 16px;
  margin: 0 20px 0 17px;
}

.peek {
  width: 5px;
  height: 40px;
  border-left: 1px solid #5f697b;
}
```
